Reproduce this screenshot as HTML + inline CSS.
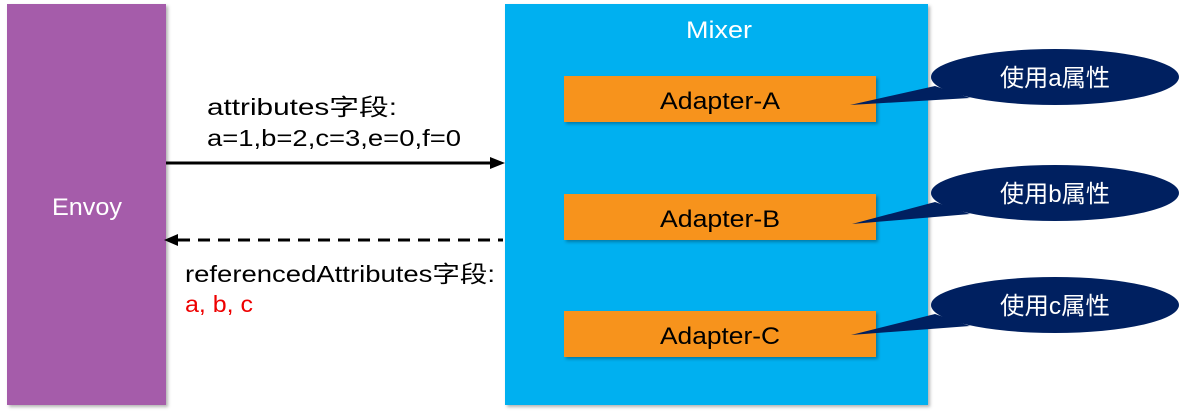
<!DOCTYPE html>
<html><head><meta charset="utf-8"><style>
html,body{margin:0;padding:0;background:#fff;width:1179px;height:415px;overflow:hidden}
text{font-family:"Liberation Sans","Noto Sans CJK SC",sans-serif}
</style></head><body>
<svg width="1179" height="415" viewBox="0 0 1179 415" xmlns="http://www.w3.org/2000/svg">
<defs><filter id="s" x="-5%" y="-5%" width="115%" height="115%"><feDropShadow dx="2" dy="2" stdDeviation="1.5" flood-color="#000" flood-opacity="0.3"/></filter></defs>
<rect x="7" y="4" width="159" height="401" fill="#A55CAA" filter="url(#s)"/>
<text x="52" y="215" fill="#fff" font-size="24" textLength="70" lengthAdjust="spacingAndGlyphs">Envoy</text>
<rect x="505" y="4" width="423" height="401" fill="#00B0F0" filter="url(#s)"/>
<text x="686" y="38" fill="#fff" font-size="24" textLength="66" lengthAdjust="spacingAndGlyphs">Mixer</text>
<g filter="url(#s)">
<rect x="564" y="76" width="312" height="46" fill="#F7931E"/>
<rect x="564" y="194" width="312" height="46" fill="#F7931E"/>
<rect x="564" y="311" width="312" height="46" fill="#F7931E"/>
</g>
<g font-size="24" fill="#000">
<text x="660" y="109" textLength="120" lengthAdjust="spacingAndGlyphs">Adapter-A</text>
<text x="660" y="227" textLength="120" lengthAdjust="spacingAndGlyphs">Adapter-B</text>
<text x="660" y="344" textLength="120" lengthAdjust="spacingAndGlyphs">Adapter-C</text>
</g>
<g fill="#002060">
<ellipse cx="1055" cy="77" rx="124" ry="28"/><path d="M935 86 L850 105 L970 98 Z"/>
<ellipse cx="1055" cy="193" rx="124" ry="28"/><path d="M935 202 L852 224 L970 214 Z"/>
<ellipse cx="1055" cy="305" rx="124" ry="28"/><path d="M935 314 L851 335 L970 326 Z"/>
</g>
<g font-size="24" fill="#fff">
<text x="1000" y="86" textLength="110" lengthAdjust="spacingAndGlyphs">使用a属性</text>
<text x="1000" y="202" textLength="110" lengthAdjust="spacingAndGlyphs">使用b属性</text>
<text x="1000" y="314" textLength="110" lengthAdjust="spacingAndGlyphs">使用c属性</text>
</g>
<line x1="166" y1="163" x2="493" y2="163" stroke="#000" stroke-width="3"/>
<path d="M505 163 L490 157 L490 169 Z" fill="#000"/>
<line x1="178" y1="240" x2="503" y2="240" stroke="#000" stroke-width="3" stroke-dasharray="12,8"/>
<path d="M164 240 L178 234 L178 246 Z" fill="#000"/>
<g font-size="23" fill="#000">
<text x="207" y="115" textLength="190" lengthAdjust="spacingAndGlyphs">attributes字段:</text>
<text x="207" y="146" textLength="254" lengthAdjust="spacingAndGlyphs">a=1,b=2,c=3,e=0,f=0</text>
<text x="185" y="282" textLength="310" lengthAdjust="spacingAndGlyphs">referencedAttributes字段:</text>
</g>
<text x="185" y="312" font-size="23" fill="#E00" textLength="68" lengthAdjust="spacingAndGlyphs">a, b, c</text>
</svg>
</body></html>
